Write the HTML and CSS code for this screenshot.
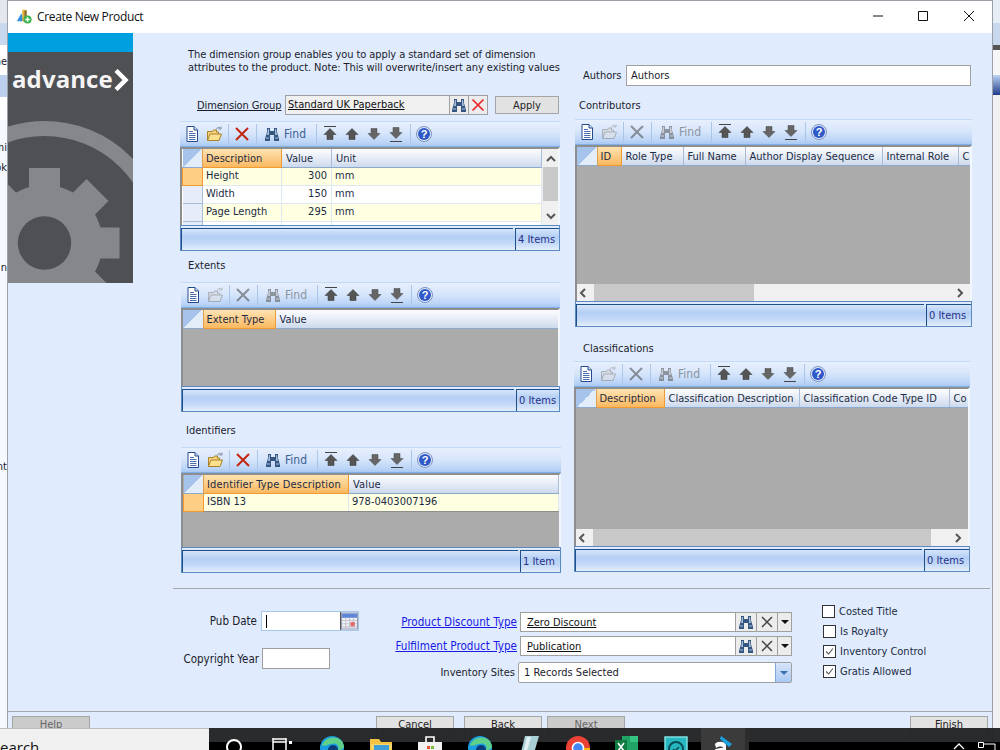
FILE: index.html
```html
<!DOCTYPE html>
<html lang="en">
<head>
<meta charset="utf-8">
<title>Create New Product</title>
<link rel="stylesheet" href="styles.css">
</head>
<body>
<svg class="defs" aria-hidden="true">
  <symbol id="i-doc" viewBox="0 0 16 16"><path d="M3 .5h7l3.500 3.500v11.500H3z" fill="#fff" stroke="#24488f"/><path d="M10 .5v3.500h3.500" fill="#cfe0f7" stroke="#24488f"/><path d="M5 5.500h4M5 7.500h6.500M5 9.500h6.500M5 11.500h6.500M5 13.500h6.500" stroke="#4a6cb0"/></symbol>
  <symbol id="i-folder" viewBox="0 0 16 16"><path d="M1.500 14.500V5.500h5l1-1.500h3v2h2v2" fill="#f5d27a" stroke="#a9822c"/><path d="M1.500 14.500l2.500-6.500h11.500l-2.500 6.500z" fill="#fbe08f" stroke="#a9822c"/><path d="M10 3.500c1-2 3-2.500 4.500-1.500M15 .5v2.500h-2.500" fill="none" stroke="#7f8ea3"/></symbol>
  <symbol id="i-x" viewBox="0 0 16 16"><path d="M2 2l12 12M14 2L2 14" stroke="#c4260f" stroke-width="2" fill="none"/></symbol>
  <symbol id="i-x-red" viewBox="0 0 16 16"><path d="M2.500 2.500l11 11M13.500 2.500l-11 11" stroke="#e8262a" stroke-width="1.700" fill="none"/></symbol>
  <symbol id="i-bin" viewBox="0 0 16 16"><path d="M3 2h3v3h4V2h3v4l2 7v2H10V9H6v6H1v-2l2-7z" fill="#36557f"/><path d="M4 3h1v6H3zM11 3h1l1 6h-2z" fill="#a3bcdc"/><path d="M2 11h3v2H2zM11 11h3v2h-3z" fill="#6d8db5"/></symbol>
  <symbol id="i-top" viewBox="0 0 16 16"><path d="M2 .5h12" stroke="#444"/><path d="M8 2.500l6 6h-3v5H5v-5H2z" fill="#555" stroke="#333" stroke-width=".5"/></symbol>
  <symbol id="i-up" viewBox="0 0 16 16"><path d="M8 2.500l6 6h-3v5H5v-5H2z" fill="#555" stroke="#333" stroke-width=".5"/></symbol>
  <symbol id="i-down" viewBox="0 0 16 16"><path d="M8 13.500l6-6h-3v-5H5v5H2z" fill="#666" stroke="#444" stroke-width=".5"/></symbol>
  <symbol id="i-bottom" viewBox="0 0 16 16"><path d="M8 12.500l6-6h-3v-5H5v5H2z" fill="#666" stroke="#444" stroke-width=".5"/><path d="M2 15.500h12" stroke="#444"/></symbol>
  <symbol id="i-help" viewBox="0 0 16 16"><circle cx="8" cy="8" r="7.500" fill="#dfe8f8" stroke="#7a93c4"/><circle cx="8" cy="8" r="6" fill="#2f58c8"/><text x="8" y="12" text-anchor="middle" class="help-mark">?</text></symbol>
  <symbol id="i-tri" viewBox="0 0 10 10"><path d="M1 7l4-4 4 4" fill="none" stroke="#555" stroke-width="2"/></symbol>
  <symbol id="i-tri-d" viewBox="0 0 10 10"><path d="M1 3l4 4 4-4" fill="none" stroke="#555" stroke-width="2"/></symbol>
  <symbol id="i-tri-l" viewBox="0 0 10 10"><path d="M7 1L3 5l4 4" fill="none" stroke="#555" stroke-width="2"/></symbol>
  <symbol id="i-tri-r" viewBox="0 0 10 10"><path d="M3 1l4 4-4 4" fill="none" stroke="#555" stroke-width="2"/></symbol>
  <symbol id="i-x-dark" viewBox="0 0 14 14"><path d="M2 2l10 10M12 2L2 12" stroke="#444" stroke-width="1.500" fill="none"/></symbol>
</svg>

<div class="behind">
  <div class="bh-a">ne</div>
  <div class="bh-b">mi</div>
  <div class="bh-c">ok</div>
  <div class="bh-d">n</div>
  <div class="bh-e">nt</div>
</div>
<div class="behind-right">
  <div class="br-a"></div>
  <div class="br-b"></div>
  <div class="br-c"></div>
  <div class="br-d"></div>
  <div class="br-e"></div>
</div>

<div class="window">
  <header class="titlebar">
    <svg class="app-icon" viewBox="0 0 18 18"><path d="M1 15L6 6l3 9z" fill="#2f8fe0"/><path d="M7 2h5v13H7z" fill="#e3b23c"/><path d="M9.500 3h2.500v8h-2.500z" fill="#8a6d3b"/><circle cx="13" cy="13" r="4.500" fill="#3cb44a"/><path d="M13 10.500v5M10.500 13h5" stroke="#fff" stroke-width="1.600"/></svg>
    <span class="title">Create New Product</span>
    <div class="win-controls">
      <svg class="wc" viewBox="0 0 12 12"><path d="M1 6h10" stroke="#111" fill="none"/></svg>
      <svg class="wc" viewBox="0 0 12 12"><path d="M1.500 1.500h9v9h-9z" stroke="#111" fill="none"/></svg>
      <svg class="wc" viewBox="0 0 12 12"><path d="M1 1l10 10M11 1L1 11" stroke="#111" fill="none"/></svg>
    </div>
  </header>

  <div class="upper">
    <aside class="logo">
      <div class="logo-strip"></div>
      <div class="logo-brand">
        <span class="logo-word">advance</span>
        <svg class="logo-chev" viewBox="0 0 16 22"><path d="M3 1.500L12.500 11 3 20.500" fill="none" stroke="#fff" stroke-width="4.500"/></svg>
      </div>
      <svg class="logo-gear" viewBox="0 0 125 168">
        <circle cx="36.500" cy="128" r="114.500" fill="none" stroke="#86878b" stroke-width="15"/>
        <g fill="#86878b">
          <circle cx="36.500" cy="128" r="58"/>
          <rect x="21" y="53" width="31" height="30"/>
          <rect x="21" y="53" width="31" height="30" transform="rotate(45 36.500 128)"/>
          <rect x="21" y="53" width="31" height="30" transform="rotate(90 36.500 128)"/>
          <rect x="21" y="53" width="31" height="30" transform="rotate(135 36.500 128)"/>
          <rect x="21" y="53" width="31" height="30" transform="rotate(-45 36.500 128)"/>
          <rect x="21" y="53" width="31" height="30" transform="rotate(-90 36.500 128)"/>
        </g>
        <circle cx="36.500" cy="128" r="26.700" fill="#4f5054"/>
      </svg>
    </aside>

    <main class="main">
      <div class="cols">
        <section class="col-left">
          <p class="intro">The dimension group enables you to apply a standard set of dimension<br>attributes to the product. Note: This will overwrite/insert any existing values</p>
          <div class="dimrow">
            <span class="dim-label">Dimension Group</span>
            <div class="dim-box">
              <span class="dim-value">Standard UK Paperback</span>
              <span class="dim-btn"><svg class="ico16"><use href="#i-bin"/></svg></span>
              <span class="dim-btn"><svg class="ico16"><use href="#i-x-red"/></svg></span>
            </div>
            <button class="apply">Apply</button>
          </div>

          <div class="panel p-dim">
            <div class="toolbar">
              <svg class="tb"><use href="#i-doc"/></svg>
              <svg class="tb"><use href="#i-folder"/></svg>
              <i class="sep"></i>
              <svg class="tb"><use href="#i-x"/></svg>
              <i class="sep"></i>
              <svg class="tb tb-bin"><use href="#i-bin"/></svg>
              <span class="find">Find</span>
              <i class="sep"></i>
              <svg class="tb"><use href="#i-top"/></svg>
              <svg class="tb"><use href="#i-up"/></svg>
              <svg class="tb"><use href="#i-down"/></svg>
              <svg class="tb"><use href="#i-bottom"/></svg>
              <i class="sep"></i>
              <svg class="tb"><use href="#i-help"/></svg>
            </div>
            <div class="gridbox gb-row">
              <table class="gt t-dim">
                <colgroup><col class="w-sel"><col class="w79"><col class="w50"><col class="w210"></colgroup>
                <thead><tr><th class="corner"></th><th class="active">Description</th><th>Value</th><th>Unit</th></tr></thead>
                <tbody>
                  <tr class="odd"><td class="sel on"></td><td>Height</td><td class="num">300</td><td>mm</td></tr>
                  <tr><td class="sel"></td><td>Width</td><td class="num">150</td><td>mm</td></tr>
                  <tr class="odd"><td class="sel"></td><td>Page Length</td><td class="num">295</td><td>mm</td></tr>
                  <tr class="clip"><td class="sel"></td><td></td><td></td><td></td></tr>
                </tbody>
              </table>
              <div class="vscroll">
                <svg class="arrow"><use href="#i-tri"/></svg>
                <div class="vthumb"></div>
                <svg class="arrow arrow-end"><use href="#i-tri-d"/></svg>
              </div>
            </div>
            <div class="status"><div class="st-main"></div><div class="st-count">4 Items</div></div>
          </div>

          <div class="label lb-ext">Extents</div>
          <div class="panel p-ext">
            <div class="toolbar off-edit">
              <svg class="tb"><use href="#i-doc"/></svg>
              <svg class="tb dim"><use href="#i-folder"/></svg>
              <i class="sep"></i>
              <svg class="tb dim"><use href="#i-x"/></svg>
              <i class="sep"></i>
              <svg class="tb tb-bin dim"><use href="#i-bin"/></svg>
              <span class="find dim-text">Find</span>
              <i class="sep"></i>
              <svg class="tb"><use href="#i-top"/></svg>
              <svg class="tb"><use href="#i-up"/></svg>
              <svg class="tb"><use href="#i-down"/></svg>
              <svg class="tb"><use href="#i-bottom"/></svg>
              <i class="sep"></i>
              <svg class="tb"><use href="#i-help"/></svg>
            </div>
            <div class="gridbox">
              <table class="gt t-ext">
                <colgroup><col class="w-sel"><col class="w72"><col class="w283"></colgroup>
                <thead><tr><th class="corner"></th><th class="active">Extent Type</th><th>Value</th></tr></thead>
              </table>
            </div>
            <div class="status"><div class="st-main"></div><div class="st-count">0 Items</div></div>
          </div>

          <div class="label lb-ids">Identifiers</div>
          <div class="panel p-ids">
            <div class="toolbar">
              <svg class="tb"><use href="#i-doc"/></svg>
              <svg class="tb"><use href="#i-folder"/></svg>
              <i class="sep"></i>
              <svg class="tb"><use href="#i-x"/></svg>
              <i class="sep"></i>
              <svg class="tb tb-bin"><use href="#i-bin"/></svg>
              <span class="find">Find</span>
              <i class="sep"></i>
              <svg class="tb"><use href="#i-top"/></svg>
              <svg class="tb"><use href="#i-up"/></svg>
              <svg class="tb"><use href="#i-down"/></svg>
              <svg class="tb"><use href="#i-bottom"/></svg>
              <i class="sep"></i>
              <svg class="tb"><use href="#i-help"/></svg>
            </div>
            <div class="gridbox">
              <table class="gt t-ids">
                <colgroup><col class="w-sel"><col class="w145"><col class="w210"></colgroup>
                <thead><tr><th class="corner"></th><th class="active">Identifier Type Description</th><th>Value</th></tr></thead>
                <tbody><tr class="odd"><td class="sel on"></td><td>ISBN 13</td><td>978-0403007196</td></tr></tbody>
              </table>
            </div>
            <div class="status st-ids"><div class="st-main"></div><div class="st-count">1 Item</div></div>
          </div>
        </section>

        <section class="col-right">
          <div class="authors">
            <span class="authors-label">Authors</span>
            <div class="textbox authors-input">Authors</div>
          </div>

          <div class="label lb-con">Contributors</div>
          <div class="panel p-con">
            <div class="toolbar">
              <svg class="tb"><use href="#i-doc"/></svg>
              <svg class="tb dim"><use href="#i-folder"/></svg>
              <i class="sep"></i>
              <svg class="tb dim"><use href="#i-x"/></svg>
              <i class="sep"></i>
              <svg class="tb tb-bin dim"><use href="#i-bin"/></svg>
              <span class="find dim-text">Find</span>
              <i class="sep"></i>
              <svg class="tb"><use href="#i-top"/></svg>
              <svg class="tb"><use href="#i-up"/></svg>
              <svg class="tb"><use href="#i-down"/></svg>
              <svg class="tb"><use href="#i-bottom"/></svg>
              <i class="sep"></i>
              <svg class="tb"><use href="#i-help"/></svg>
            </div>
            <div class="gridbox gb-col">
              <table class="gt t-con">
                <colgroup><col class="w-sel"><col class="w24"><col class="w62"><col class="w62"><col class="w137"><col class="w76"><col class="w12"></colgroup>
                <thead><tr><th class="corner"></th><th class="active">ID</th><th>Role Type</th><th>Full Name</th><th>Author Display Sequence</th><th>Internal Role</th><th>C</th></tr></thead>
              </table>
              <div class="hscroll">
                <svg class="arrow"><use href="#i-tri-l"/></svg>
                <div class="hthumb ht-con"></div>
                <svg class="arrow arrow-end"><use href="#i-tri-r"/></svg>
              </div>
            </div>
            <div class="status st-right"><div class="st-main"></div><div class="st-count">0 Items</div></div>
          </div>

          <div class="label lb-cls">Classifications</div>
          <div class="panel p-cls">
            <div class="toolbar">
              <svg class="tb"><use href="#i-doc"/></svg>
              <svg class="tb dim"><use href="#i-folder"/></svg>
              <i class="sep"></i>
              <svg class="tb dim"><use href="#i-x"/></svg>
              <i class="sep"></i>
              <svg class="tb tb-bin dim"><use href="#i-bin"/></svg>
              <span class="find dim-text">Find</span>
              <i class="sep"></i>
              <svg class="tb"><use href="#i-top"/></svg>
              <svg class="tb"><use href="#i-up"/></svg>
              <svg class="tb"><use href="#i-down"/></svg>
              <svg class="tb"><use href="#i-bottom"/></svg>
              <i class="sep"></i>
              <svg class="tb"><use href="#i-help"/></svg>
            </div>
            <div class="gridbox gb-col">
              <table class="gt t-cls">
                <colgroup><col class="w-sel"><col class="w68"><col class="w135"><col class="w150"><col class="w20"></colgroup>
                <thead><tr><th class="corner"></th><th class="active">Description</th><th>Classification Description</th><th>Classification Code Type ID</th><th>Co</th></tr></thead>
              </table>
              <div class="hscroll">
                <svg class="arrow"><use href="#i-tri-l"/></svg>
                <div class="hthumb ht-cls"></div>
                <svg class="arrow arrow-end"><use href="#i-tri-r"/></svg>
              </div>
            </div>
            <div class="status st-right"><div class="st-main"></div><div class="st-count">0 Items</div></div>
          </div>
        </section>
      </div>

      <div class="form">
        <div class="f-left">
          <div class="f-row r-pub">
            <span>Pub Date</span>
            <div class="datebox">
              <span class="caret"></span>
              <svg class="cal" viewBox="0 0 16 16"><path d="M.5.500h15v15H.5z" fill="#f2f2f5" stroke="#9a9db5"/><path d="M1 1h14v4H1z" fill="#5d86d6"/><path d="M1 7.500h14M1 10.500h14M1 13.500h14M4.500 5v10M8 5v10M11.500 5v10" stroke="#c2c4d0"/><path d="M9 9h4v4H9z" fill="#e06a6a"/></svg>
            </div>
          </div>
          <div class="f-row r-copy">
            <span>Copyright Year</span>
            <div class="textbox copy-input"></div>
          </div>
        </div>

        <div class="f-mid">
          <div class="f-row r-a">
            <a class="link" href="#">Product Discount Type</a>
            <div class="lookup">
              <span class="lk-value">Zero Discount</span>
              <span class="lk-btn"><svg class="ico16"><use href="#i-bin"/></svg></span>
              <span class="lk-btn"><svg class="ico14"><use href="#i-x-dark"/></svg></span>
              <span class="lk-drop"></span>
            </div>
          </div>
          <div class="f-row r-b">
            <a class="link" href="#">Fulfilment Product Type</a>
            <div class="lookup">
              <span class="lk-value">Publication</span>
              <span class="lk-btn"><svg class="ico16"><use href="#i-bin"/></svg></span>
              <span class="lk-btn"><svg class="ico14"><use href="#i-x-dark"/></svg></span>
              <span class="lk-drop"></span>
            </div>
          </div>
          <div class="f-row r-c">
            <span>Inventory Sites</span>
            <div class="combo">
              <span class="cb-value">1 Records Selected</span>
              <span class="cb-drop"></span>
            </div>
          </div>
        </div>

        <div class="f-checks">
          <label class="chk chk-first"><span class="box"></span>Costed Title</label>
          <label class="chk"><span class="box"></span>Is Royalty</label>
          <label class="chk"><span class="box"><svg viewBox="0 0 13 13"><path d="M2.500 6.500l3 3 5-6.500" fill="none" stroke="#555" stroke-width="1.300"/></svg></span>Inventory Control</label>
          <label class="chk"><span class="box"><svg viewBox="0 0 13 13"><path d="M2.500 6.500l3 3 5-6.500" fill="none" stroke="#555" stroke-width="1.300"/></svg></span>Gratis Allowed</label>
        </div>
      </div>
    </main>
  </div>

  <footer class="actions">
    <button class="btn off">Help</button>
    <button class="btn b-cancel">Cancel</button>
    <button class="btn b-back">Back</button>
    <button class="btn off b-next">Next</button>
    <button class="btn b-finish">Finish</button>
  </footer>
</div>

<div class="taskbar">
  <div class="tk-search">earch</div>
  <div class="tk-slot"><svg class="tk-i" viewBox="0 0 24 24"><circle cx="12" cy="11" r="7" fill="none" stroke="#fff" stroke-width="2"/></svg></div>
  <div class="tk-slot"><svg class="tk-i" viewBox="0 0 24 24"><path d="M2 2v1h13V2M2 3v12M15 3v12M2 6h13" fill="none" stroke="#fff" stroke-width="1.500"/><path d="M18 5h3v3h-3z" fill="#fff"/></svg></div>
  <div class="tk-slot"><svg class="tk-i" viewBox="0 0 24 24"><circle cx="12" cy="12" r="12" fill="#1b9de2"/><path d="M2 9C6-1 22-1 24 10c0 3-3 4-6 4 2-4-2-8-7-6-5 1-7 3-9 1z" fill="#5fd08a"/><circle cx="13" cy="14" r="5" fill="#0c3c78"/></svg></div>
  <div class="tk-slot"><svg class="tk-i" viewBox="0 0 24 24"><path d="M1 3h9l2 3h11v18H1z" fill="#f5c242"/><path d="M2 8h21v16H2z" fill="#f9d568"/><path d="M5 9h15v10H5z" fill="#3f9fd8"/></svg></div>
  <div class="tk-slot"><svg class="tk-i" viewBox="0 0 24 24"><path d="M8 6V1h8v5" fill="none" stroke="#fff" stroke-width="1.600"/><path d="M0 6h24v18H0z" fill="#f2f2f2"/><path d="M9 10h3v3H9z" fill="#e8552d"/><path d="M13 10h3v3h-3z" fill="#7cba3b"/><path d="M9 14h3v3H9z" fill="#2fa4e7"/><path d="M13 14h3v3h-3z" fill="#f8b620"/></svg></div>
  <div class="tk-slot"><svg class="tk-i" viewBox="0 0 24 24"><circle cx="12" cy="12" r="12" fill="#1b9de2"/><path d="M2 9C6-1 22-1 24 10c0 3-3 4-6 4 2-4-2-8-7-6-5 1-7 3-9 1z" fill="#5fd08a"/><circle cx="13" cy="14" r="5" fill="#0c3c78"/></svg></div>
  <div class="tk-slot"><svg class="tk-i" viewBox="0 0 24 24"><path d="M8 0h14L15 24H2z" fill="#a8d0d6"/><path d="M10 1h4L8 22H5z" fill="#e3f1f3"/></svg></div>
  <div class="tk-slot"><svg class="tk-i" viewBox="0 0 24 24"><circle cx="12" cy="12" r="12" fill="#ea4335"/><path d="M12 12L2 24h20z" fill="#34a853"/><path d="M12 12h12v12z" fill="#fbbc05"/><circle cx="12" cy="12" r="5.500" fill="#4285f4" stroke="#fff" stroke-width="1.500"/></svg></div>
  <div class="tk-slot"><svg class="tk-i" viewBox="0 0 24 24"><path d="M7 0h16v24H7z" fill="#21a366"/><path d="M15 0h8v6h-8z" fill="#33c481"/><path d="M0 4h12v14H0z" fill="#107c41"/><path d="M3 7l6 8M9 7l-6 8" stroke="#fff" stroke-width="1.600"/></svg></div>
  <div class="tk-slot"><svg class="tk-i" viewBox="0 0 24 24"><path d="M1 1h22v23H1z" fill="#27b8bf" stroke="#7fe0e4" stroke-width="1.500"/><circle cx="12" cy="13" r="7" fill="none" stroke="#0b4e58" stroke-width="2"/><path d="M9 13l2 2 4-4" fill="none" stroke="#0b4e58" stroke-width="1.600"/></svg></div>
  <div class="tk-slot tk-active"><svg class="tk-i" viewBox="0 0 24 24"><path d="M4 8c2-3 10-3 11 1v13h-3v-2c-4 3-10 2-10-3 0-4 5-5 10-5 0-2-5-2-7 0z" fill="#fff"/><path d="M10 0l11 8-3 3-9-8z" fill="#1ba1e2"/></svg></div>
  <div class="tk-tray">
    <svg class="tk-chev" viewBox="0 0 12 8"><path d="M1 7l5-5 5 5" fill="none" stroke="#fff" stroke-width="1.300"/></svg>
    <svg class="tk-net" viewBox="0 0 18 10"><path d="M.5.500h5v5h-5z" fill="none" stroke="#fff"/><path d="M5 2h12v8" fill="none" stroke="#fff"/></svg>
  </div>
</div>
</body>
</html>
```
FILE: styles.css
```css
* { box-sizing: border-box; }
html, body { margin: 0; padding: 0; }
body {
  width: 1000px;
  height: 750px;
  position: relative;
  overflow: hidden;
  background: #f5f9ff;
  font-family: "DejaVu Sans Condensed", "DejaVu Sans", sans-serif;
  font-size: 11px;
  color: #1b1b2b;
}
.defs { position: absolute; width: 0; height: 0; }
.help-mark { font: bold 11px "Liberation Sans", sans-serif; fill: #fff; }

/* what is behind the dialog */
.behind {
  position: absolute; left: 0; top: 0; width: 7px; height: 728px;
  overflow: hidden; white-space: nowrap;
  background: linear-gradient(#e4e8ee 0 23px, #c8d8ee 23px 45px, #fff 45px 75px, #bcd0ee 75px 97px, #fff 97px 120px, #f5f9ff 120px);
}
.bh-a, .bh-b, .bh-c, .bh-d, .bh-e { height: 14px; line-height: 14px; font-size: 11px; display: flex; justify-content: flex-end; }
.bh-a { margin-top: 55px; }
.bh-b { margin-top: 72px; }
.bh-c { margin-top: 6px; }
.bh-d { margin-top: 86px; }
.bh-e { margin-top: 185px; }

.behind-right { position: absolute; left: 993px; top: 0; width: 7px; height: 750px; background: #f0f0f0; }
.br-a { height: 23px; background: #e8eef5; }
.br-b { height: 22px; background: #c8d8ee; }
.br-c { height: 5px; background: #555; }
.br-d { height: 25px; background: #f7f7f7; }
.br-e { height: 20px; background: linear-gradient(#bcd4f4, #1f3a8a); }

/* window */
.window {
  position: absolute; left: 7px; top: 0; width: 986px; height: 750px;
  border: 1px solid #9a9fa8; border-bottom: 0;
  background: #e0ecfd;
  overflow: hidden;
}
.titlebar { height: 32px; background: #fff; display: flex; align-items: center; }
.app-icon { width: 16px; height: 16px; margin-left: 8px; margin-top: -3px; flex: none; }
.title { margin: -2px 0 0 5px; font: 12px "Open Sans", sans-serif; letter-spacing: -.33px; color: #111; }
.win-controls { margin-left: auto; margin-top: -2px; display: flex; }
.wc { width: 12px; height: 12px; margin-left: 33px; }
.wc:last-child { margin-left: 34px; margin-right: 17px; }

.upper { display: flex; height: 679px; border-bottom: 1px solid #a5a8ad; }

/* logo */
.logo { width: 125px; height: 250px; background: #4f5054; flex: none; overflow: hidden; }
.logo-strip { height: 19px; background: #009fdf; }
.logo-brand { height: 64px; padding: 11px 0 0 4px; display: flex; align-items: flex-start; }
.logo-word { font: 700 24px/32px "Open Sans", sans-serif; letter-spacing: .1px; color: #f4f4f4; }
.logo-chev { width: 16px; height: 22px; margin: 6px 0 0 0; flex: none; }
.logo-gear { display: block; width: 125px; height: 168px; margin-top: -1px; }

.main { flex: 1; min-width: 0; }
.cols { display: flex; height: 555px; padding-left: 47px; }
.col-left { width: 395px; flex: none; }
.col-right { width: 417px; flex: none; }

.intro { margin: 15px 0 0 8px; line-height: 13px; height: 27px; letter-spacing: -.08px; white-space: nowrap; }
.dimrow { display: flex; margin: 20px 0 0 17px; height: 20px; align-items: center; }
.dim-label { width: 88px; text-decoration: underline; letter-spacing: -.1px; color: #1a1a2a; }
.dim-box { width: 203px; height: 20px; display: flex; background: #f0f0f0; border: 1px solid #a0a0a0; }
.dim-value { width: 164px; padding-left: 2px; line-height: 18px; text-decoration: underline; color: #111; }
.dim-btn { width: 19px; display: flex; align-items: center; justify-content: center; background: #ececec; border-left: 1px solid #a0a0a0; }
.ico16 { width: 16px; height: 16px; }
.ico14 { width: 14px; height: 14px; }
.apply { width: 64px; height: 18px; margin-left: 7px; padding: 0; border: 1px solid #a5a5a5; background: #e2e2e2; font: inherit; color: #222; }

.label { height: 14px; line-height: 16px; color: #1b1b2b; }
.lb-ext { margin: 7px 0 0 8px; }
.lb-ids { margin: 11px 0 0 6px; }
.lb-con { margin: 12px 0 0 4px; }
.lb-cls { margin: 14px 0 0 8px; }

/* grid panel */
.panel { display: flex; flex-direction: column; }
.p-dim { margin-top: 6px; height: 130px; width: 380px; }
.p-ext { margin: 10px 0 0 1px; height: 130px; width: 379px; }
.p-ids { margin: 10px 0 0 1px; height: 126px; width: 380px; }
.p-con { margin-top: 7px; height: 208px; width: 397px; }
.p-cls { margin: 6px 0 0 -1px; height: 211px; width: 396px; }

.toolbar {
  height: 26px; flex: none; display: flex; align-items: center; padding-left: 4px;
  background: linear-gradient(#e6effd, #d8e6fb 45%, #bcd5f7 85%, #a9c8f2);
  border-top: 1px solid #c3d9f6;
  border-bottom: 1px solid #7fb0ea;
}
.tb { width: 16px; height: 16px; margin-right: 6px; flex: none; }
.tb-bin { margin-left: 2px; margin-right: 4px; }
.dim { filter: grayscale(1) opacity(.55); }
.sep { width: 1px; height: 20px; margin-right: 5px; background: #a9c5ea; flex: none; }
.find { width: 23px; margin-right: 9px; color: #3a5f96; font-size: 12px; flex: none; }
.dim-text { color: #8a949f; }

.gridbox {
  flex: 1; min-height: 0; overflow: hidden; background: #ababab;
  border: 2px solid #8e8e8e; border-right: 2px solid #f2f6fd; border-bottom: 0;
}
.gb-row { display: flex; }
.gb-col { display: flex; flex-direction: column; }

.gt { table-layout: fixed; border-collapse: collapse; flex: none; }
.t-dim { width: 359px; background: #fff; height: 76px; }
.t-ext { width: 375px; }
.t-ids { width: 375px; }
.t-ids th { letter-spacing: .15px; }
.t-con { width: 393px; }
.t-cls { width: 393px; }
.w-sel { width: 20px; }
.w12 { width: 12px; } .w20 { width: 20px; } .w24 { width: 24px; }
.w50 { width: 50px; } .w62 { width: 62px; } .w68 { width: 68px; }
.w72 { width: 72px; } .w76 { width: 76px; } .w79 { width: 79px; }
.w135 { width: 135px; } .w137 { width: 137px; } .w145 { width: 145px; }
.w150 { width: 150px; } .w210 { width: 210px; } .w283 { width: 283px; }

.gt th {
  height: 18px; padding: 1px 0 0 4px; text-align: left; font-weight: normal; overflow: hidden; white-space: nowrap;
  color: #1c2b44;
  background: linear-gradient(#fbfcfe, #e6ecf6 50%, #ccd9ec);
  border-right: 1px solid #a9bdd8; border-bottom: 1px solid #8fa9cc;
}
.gt th.active { background: linear-gradient(#fde3b2, #fbb860); border: 1px solid #f09a30; border-top: 0; padding-left: 3px; }
.gt th.corner { padding: 0; background: linear-gradient(135deg, #a6c3ec 0 50%, #e3edf9 50%); border-right: 1px solid #e0a050; }
.gt td { height: 18px; padding: 0 0 2px 3px; overflow: hidden; white-space: nowrap; color: #1c2b44; border-right: 1px solid #dfe7f3; border-bottom: 1px solid #dfe7f3; background: #fff; }
.gt tr.odd td { background: #ffffe2; }
.gt td.num { text-align: right; padding: 0 4px 2px 0; }
.gt td.sel, .gt tr.odd td.sel { padding: 0; background: #e6edf8; border-right: 1px solid #a9bdd8; border-bottom: 1px solid #a9bdd8; }
.gt td.sel.on, .gt tr.odd td.sel.on { background: #ffce85; border: 1px solid #f09a30; border-top: 0; }
.gt tr.clip td { height: 3px; padding: 0; line-height: 3px; font-size: 1px; border-bottom: 0; }
.gt tbody tr:last-child td { border-bottom-color: #8e8e8e; }

.vscroll { width: 17px; flex: none; background: #f0f0f0; display: flex; flex-direction: column; align-items: center; padding-top: 5px; }
.vthumb { width: 15px; height: 34px; margin-top: 3px; background: #c8c8c8; }
.arrow { width: 10px; height: 10px; flex: none; }
.vscroll .arrow-end { margin-top: 10px; }

.hscroll { margin-top: auto; height: 17px; flex: none; background: #f0f0f0; display: flex; align-items: center; padding: 0 5px 0 1px; }
.hthumb { height: 17px; background: #c8c8c8; margin-left: 6px; }
.ht-con { width: 160px; }
.ht-cls { width: 338px; }
.hscroll .arrow-end { margin-left: auto; }

.status { height: 26px; flex: none; display: flex; border: 1px solid #5b8ac2; padding-top: 2px;
  background: linear-gradient(#e3eefd, #b4cff4 45%, #c2d8f7 70%, #e3eefd); }
.st-main { flex: 1; border-left: 1px solid #1f4e8c; border-top: 1px solid #1f4e8c; }
.st-count { width: 43px; margin-left: 2px; padding-left: 2px; line-height: 22px; color: #27308a; border-left: 1px solid #1f4e8c; border-top: 1px solid #1f4e8c; white-space: nowrap; }
.st-ids .st-count { width: 40px; }
.p-dim .st-count { width: 44px; }
.st-right .st-count { width: 45px; }

/* right column fields */
.authors { display: flex; align-items: center; margin: 32px 0 0 8px; height: 21px; }
.authors-label { width: 43px; }
.textbox { background: #fff; border: 1px solid #a0a0a0; height: 21px; line-height: 19px; padding-left: 4px; }
.authors-input { width: 345px; }

/* form */
.form { display: flex; height: 123px; margin-left: 40px; margin-right: 2px; border-top: 1px solid #a5a8ad; padding-left: 10px; }
.f-left { width: 176px; display: flex; flex-direction: column; align-items: flex-end; font-size: 11.500px; }
.f-row { display: flex; align-items: center; }
.r-pub { margin-top: 22px; gap: 4px; height: 20px; }
.r-copy { margin-top: 17px; gap: 3px; margin-right: 29px; }
.datebox { width: 98px; height: 20px; display: flex; justify-content: space-between; align-items: center; background: #fff; border: 1px solid #a8c8ea; }
.caret { width: 1px; height: 13px; margin-left: 4px; background: #000; }
.cal { width: 18px; height: 18px; border-left: 1px solid #555; background: #e0ecfd; flex: none; }
.copy-input { width: 68px; }

.f-mid { width: 433px; display: flex; flex-direction: column; align-items: flex-end; }
.f-mid .f-row { gap: 3px; }
.r-a { margin-top: 23px; }
.r-b { margin-top: 4px; }
.r-c { margin-top: 6px; }
.link { color: #1a1ae8; text-decoration: underline; font-size: 11.600px; }
.lookup { width: 272px; height: 20px; display: flex; background: #fff; border: 1px solid #a0a0a0; }
.lk-value { flex: 1; padding-left: 6px; line-height: 19px; text-decoration: underline; color: #111; }
.lk-btn { width: 21px; display: flex; align-items: center; justify-content: center; background: #ececec; border-left: 1px solid #a0a0a0; }
.lk-drop { width: 14px; background: #ececec; border-left: 1px solid #a0a0a0; display: flex; align-items: center; justify-content: center; }
.lk-drop::after { content: ""; border: 4px solid transparent; border-top: 4px solid #111; border-bottom: 0; }
.combo { width: 274px; height: 21px; display: flex; background: #fff; border: 1px solid #a0a0a0; border-radius: 2px; }
.cb-value { flex: 1; padding-left: 5px; line-height: 19px; }
.cb-drop { width: 16px; background: linear-gradient(#d6e6fb, #a9c9f3); border-left: 1px solid #7fa8dc; display: flex; align-items: center; justify-content: center; }
.cb-drop::after { content: ""; border: 4px solid transparent; border-top: 4px solid #3f6fb5; border-bottom: 0; }

.f-checks { margin: 12px 0 0 30px; display: flex; flex-direction: column; }
.chk { height: 20px; display: flex; align-items: center; gap: 4px; margin-left: 1px; color: #1c2b44; }
.chk-first { margin-left: 0; }
.box { width: 13px; height: 13px; border: 1px solid #333; background: #fff; display: block; }
.box svg { display: block; width: 11px; height: 11px; }

/* buttons */
.actions { display: flex; padding: 4px 0 0 4px; }
.btn { width: 78px; height: 23px; padding: 0 0 6px; border: 1px solid #a5a5a5; background: #e2e2e2; font: inherit; color: #222; flex: none; }
.btn.off { background: #cbcbcb; color: #666; }
.b-cancel { margin-left: 286px; }
.b-back { margin-left: 10px; }
.b-next { margin-left: 5px; }
.b-finish { margin-left: 285px; }

/* taskbar */
.taskbar {
  position: absolute; left: 0; bottom: 0; width: 1000px; height: 22px; display: flex; overflow: hidden;
  background: linear-gradient(rgba(34,35,36,.96) 0 14px, #000 14px);
}
.tk-search { width: 209px; flex: none; background: #f0f0f0; border-top: 1px solid #bdbdbd; font: 15px/36px "Open Sans", sans-serif; color: #111; }
.tk-slot { width: 49.200px; flex: none; display: flex; justify-content: center; }
.tk-i { width: 24px; height: 24px; margin-top: 8px; flex: none; }
.tk-active { width: 48px; background: #3b3b3b; border-right: 4px solid #2d2d2d; }
.tk-tray { margin-left: auto; display: flex; padding-right: 4px; }
.tk-chev { width: 12px; height: 8px; margin: 14px 13px 0 0; }
.tk-net { width: 18px; height: 10px; margin-top: 14px; }
```
